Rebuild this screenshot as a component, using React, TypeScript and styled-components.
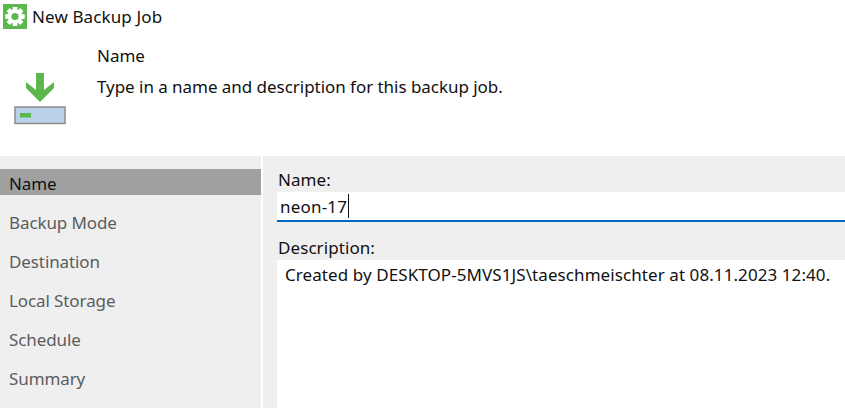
import React from "react";
import styled, { createGlobalStyle } from "styled-components";

const Global = createGlobalStyle`
  html, body { margin: 0; padding: 0; background: #fff; }
  body { font-family: "Noto Sans", "Open Sans", sans-serif; color: #111; overflow: hidden; }
`;

const Page = styled.div`
  width: 845px;
  height: 408px;
  display: flex;
  flex-direction: column;
  overflow: hidden;
`;
const Header = styled.header`
  height: 156px;
  flex: none;
  display: flex;
  flex-direction: column;
`;
const TitleBar = styled.div`
  display: flex;
  align-items: center;
  gap: 5px;
  padding: 4px 0 0 3px;
  height: 25px;
`;
const Title = styled.div`
  font-size: 17px;
  line-height: 25px;
  letter-spacing: 0.12px;
`;
const Intro = styled.div`
  display: flex;
  padding-top: 16px;
`;
const HeroSlot = styled.div`
  width: 97px;
  flex: none;
  padding: 28px 0 0 14px;
  box-sizing: border-box;
`;
const IntroText = styled.div`
  display: flex;
  flex-direction: column;
  gap: 9px;
  font-size: 17px;
  line-height: 22px;
  letter-spacing: -0.04px;
`;
const Body = styled.div`
  flex: 1;
  display: flex;
  gap: 2px;
  min-height: 0;
`;
const Sidebar = styled.nav`
  width: 261px;
  flex: none;
  background: #efefef;
  padding-top: 13px;
  box-sizing: border-box;
  display: flex;
  flex-direction: column;
  gap: 13px;
`;
const Step = styled.div<{ $active?: boolean }>`
  height: 26px;
  line-height: 29px;
  padding-left: 9px;
  font-size: 17px;
  letter-spacing: -0.1px;
  background: ${(p) => (p.$active ? "#a0a0a0" : "transparent")};
  color: ${(p) => (p.$active ? "#111" : "#5c5c5c")};
`;
const Panel = styled.main`
  flex: 1;
  background: #efefef;
  padding: 12px 0 0 14px;
  display: flex;
  flex-direction: column;
  min-width: 0;
`;
const FieldLabel = styled.label`
  font-size: 17px;
  line-height: 24px;
  height: 24px;
  padding-left: 1px;
  letter-spacing: 0.08px;
`;
const NameInput = styled.div`
  height: 28px;
  background: #fff;
  border-bottom: 2px solid #0067c0;
  display: flex;
  align-items: center;
  padding-left: 3px;
  font-size: 17px;
  letter-spacing: 0.2px;
  margin-bottom: 14px;
`;
const Caret = styled.span`
  width: 1px;
  height: 24px;
  background: #111;
  margin-left: 1px;
`;
const Description = styled.div`
  flex: 1;
  background: #fff;
  padding: 3px 0 0 8px;
  font-size: 17px;
  line-height: 24px;
  letter-spacing: 0.08px;
  white-space: nowrap;
`;

const GearIcon = () => (
  <svg width="24" height="25" viewBox="0 0 24 25" aria-hidden="true">
    <rect width="24" height="25" fill="#5cb84c" />
    <g fill="#fff">
      {[0, 45, 90, 135, 180, 225, 270, 315].map((a) => (
        <rect key={a} x="9.8" y="3" width="4.4" height="19" transform={`rotate(${a} 12 12.5)`} />
      ))}
      <circle cx="12" cy="12.5" r="7.2" />
    </g>
    <circle cx="12" cy="12.5" r="3.6" fill="#5cb84c" />
  </svg>
);

const BackupIcon = () => (
  <svg width="52" height="52" viewBox="0 0 52 52" aria-hidden="true">
    <path d="M22 0H30V17L40 9V15L26 29L12 15V9L22 17Z" fill="#5cb84c" />
    <rect x="1" y="34" width="50" height="16.5" fill="#b9d2ea" stroke="#8c8c8c" strokeWidth="1.5" />
    <rect x="6" y="40" width="11" height="4.5" fill="#5cb84c" />
  </svg>
);

const steps = ["Name", "Backup Mode", "Destination", "Local Storage", "Schedule", "Summary"];

export default function App() {
  return (
    <Page>
      <Global />
      <Header>
        <TitleBar>
          <GearIcon />
          <Title>New Backup Job</Title>
        </TitleBar>
        <Intro>
          <HeroSlot>
            <BackupIcon />
          </HeroSlot>
          <IntroText>
            <div>Name</div>
            <div>Type in a name and description for this backup job.</div>
          </IntroText>
        </Intro>
      </Header>
      <Body>
        <Sidebar>
          {steps.map((s, i) => (
            <Step key={s} $active={i === 0}>{s}</Step>
          ))}
        </Sidebar>
        <Panel>
          <FieldLabel>Name:</FieldLabel>
          <NameInput>neon-17<Caret /></NameInput>
          <FieldLabel>Description:</FieldLabel>
          <Description>Created by DESKTOP-5MVS1JS\taeschmeischter at 08.11.2023 12:40.</Description>
        </Panel>
      </Body>
    </Page>
  );
}
